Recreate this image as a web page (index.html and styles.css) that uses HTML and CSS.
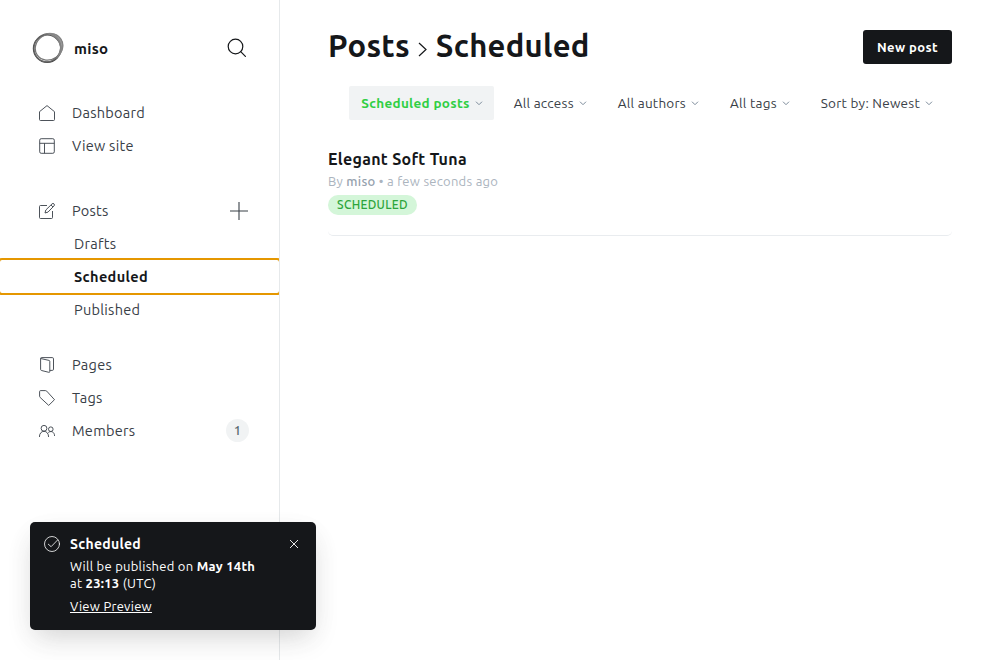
FILE: index.html
```html
<!DOCTYPE html>
<html lang="en">
<head>
<meta charset="utf-8">
<title>Posts - miso</title>
<link rel="stylesheet" href="styles.css">
</head>
<body>
<div class="app">
  <nav class="sidebar">
    <header class="brand">
      <svg class="brand-logo" width="32" height="32" viewBox="0 0 32 32" fill="none">
        <circle cx="15.2" cy="16.6" r="13.7" stroke="#444" stroke-width="1.4"/>
        <ellipse cx="17" cy="15" rx="14.300" ry="12.6" transform="rotate(-35 17 15)" stroke="#777" stroke-width="1.3"/>
        <ellipse cx="15.3" cy="15.8" rx="13.2" ry="14.200" transform="rotate(20 15.3 15.8)" stroke="#666" stroke-width="1.2"/>
        <path d="M14 1.500C21-1 30 4 31 12c.8 6-3 13-8 15.500 4-5 6.500-10 4-16C25 6 20 3.500 14 1.500Z" fill="#888" opacity=".85"/>
      </svg>
      <span class="brand-name">miso</span>
      <svg class="search" width="20" height="20" viewBox="0 0 20 20" fill="none" stroke="#15171a" stroke-width="1.2" stroke-linecap="round"><circle cx="8.500" cy="8.500" r="7.300"/><path d="m13.700 13.700 4.700 4.700"/></svg>
    </header>
    <ul class="menu menu-top">
      <li class="item"><svg class="icon" viewBox="0 0 16 16"><path d="M.5 6.700 8 .6l7.500 6.100v7.800a1 1 0 0 1-1 1h-13a1 1 0 0 1-1-1Z"/></svg><span>Dashboard</span></li>
      <li class="item"><svg class="icon" viewBox="0 0 16 16"><rect x=".7" y=".7" width="14.600" height="14.600" rx="1.500"/><path d="M.7 5.300h14.600M5.500 5.300v10"/></svg><span>View site</span></li>
    </ul>
    <ul class="menu menu-posts">
      <li class="item"><svg class="icon" viewBox="0 0 16 16"><path d="M8 2.500H1.500a1 1 0 0 0-1 1v11a1 1 0 0 0 1 1h11a1 1 0 0 0 1-1V8M6 10l.8-3L13 .9a1.300 1.300 0 0 1 2 2L9 9.100ZM12 2l2 2"/></svg><span>Posts</span>
        <svg class="plus" width="18" height="18" viewBox="0 0 18 18" stroke="#394047" stroke-width="1.100"><path d="M9 0v18M0 9h18"/></svg></li>
      <li class="item sub"><span>Drafts</span></li>
      <li class="item sub active"><span>Scheduled</span></li>
      <li class="item sub"><span>Published</span></li>
    </ul>
    <ul class="menu">
      <li class="item"><svg class="icon" viewBox="0 0 16 16"><path d="M1.600 1.500 10 3.400a1 1 0 0 1 .8 1v10.100a.8.8 0 0 1-1 .8l-7.300-1.800a1.200 1.200 0 0 1-.9-1.200V1.500q0-.9.9-.9h10.800a1.200 1.200 0 0 1 1.200 1.200v10.400a1.200 1.200 0 0 1-1.200 1.200h-2.500"/></svg><span>Pages</span></li>
      <li class="item"><svg class="icon" viewBox="0 0 16 16"><path d="M.6 1.600a1 1 0 0 1 1-1h4.800a2 2 0 0 1 1.300.5l7.800 8.600-5.800 5.700-8.500-7.900a2 2 0 0 1-.6-1.300Z"/></svg><span>Tags</span></li>
      <li class="item"><svg class="icon" viewBox="0 0 16 16"><circle cx="5" cy="5.300" r="2.900"/><circle cx="11.800" cy="6.200" r="2.300"/><path d="M.4 14c0-3.500 2-5.700 4.600-5.700S9.600 10.500 9.600 14M9.300 9.500c2.800-2.100 6.200-.6 6.300 3.500"/></svg><span>Members</span><span class="count">1</span></li>
    </ul>
  </nav>
  <main class="content">
    <header class="heading">
      <h1 class="title"><span>Posts</span><svg class="chevron" width="9" height="15" viewBox="0 0 9 15" fill="none" stroke="#15171a" stroke-width="1.200"><path d="m1 1 7 6.500-7 6.500"/></svg><span>Scheduled</span></h1>
      <button class="new-post">New post</button>
    </header>
    <div class="filters">
      <span class="filter selected"><span>Scheduled posts</span><svg class="caret" viewBox="0 0 8 5"><path d="m1 .7 3 3 3-3"/></svg></span>
      <span class="filter"><span>All access</span><svg class="caret" viewBox="0 0 8 5"><path d="m1 .7 3 3 3-3"/></svg></span>
      <span class="filter"><span>All authors</span><svg class="caret" viewBox="0 0 8 5"><path d="m1 .7 3 3 3-3"/></svg></span>
      <span class="filter"><span>All tags</span><svg class="caret" viewBox="0 0 8 5"><path d="m1 .7 3 3 3-3"/></svg></span>
      <span class="filter"><span>Sort by: Newest</span><svg class="caret" viewBox="0 0 8 5"><path d="m1 .7 3 3 3-3"/></svg></span>
    </div>
    <article class="post">
      <h2 class="post-title">Elegant Soft Tuna</h2>
      <p class="meta">By <b>miso</b> • a few seconds ago</p>
      <span class="status">SCHEDULED</span>
    </article>
  </main>
</div>
<aside class="toast">
  <svg class="check" width="16" height="16" viewBox="0 0 16 16" fill="none" stroke="#fff" stroke-width=".8" stroke-linecap="round" stroke-linejoin="round"><circle cx="8" cy="8" r="7.500"/><path d="m4.300 8.200 2.800 2.500 6.300-6.500"/></svg>
  <div class="toast-body">
    <strong class="toast-title">Scheduled</strong>
    <p class="toast-text">Will be published on <b>May 14th</b><br>at <b>23:13</b> (UTC)</p>
    <a class="preview">View Preview</a>
  </div>
  <svg class="close" width="10" height="10" viewBox="0 0 10 10" stroke="#fff" stroke-width=".9"><path d="m1 1 8 8m0-8-8 8"/></svg>
</aside>
</body>
</html>
```

FILE: styles.css
```css
* { box-sizing: border-box; }
body { margin: 0; background: #fff; color: #15171a; font-family: Ubuntu, "Noto Sans", sans-serif; letter-spacing: .27px; overflow: hidden; }
h1, h2, p, ul { margin: 0; padding: 0; }
.app { display: flex; height: 660px; }
.sidebar { width: 280px; border-right: 1px solid #e6e9eb; overflow: hidden; flex: none; }
.brand { display: flex; align-items: center; height: 32px; margin: 32px 32px 32px 32px; }
.brand-name { font-size: 15px; font-weight: 700; margin-left: 10px; }
.search { margin-left: auto; }
.menu { list-style: none; }
.menu-top { margin-bottom: 32px; }
.menu-posts { margin-bottom: 22px; }
.item { height: 33px; display: flex; align-items: center; padding: 0 30px 0 39px; font-size: 14.5px; color: #394047; white-space: nowrap; }
.icon { width: 16px; height: 16px; margin-right: 17px; fill: none; stroke: #394047; stroke-width: .9; stroke-linejoin: round; }
.sub { padding-left: 74px; }
.active { color: #15171a; font-weight: 700; outline: 2px solid #e59700; border-radius: 2px; letter-spacing: .35px; }
.plus { margin: 0 1px 0 auto; }
.count { margin-left: auto; width: 23px; height: 23px; border-radius: 12px; background: #f1f3f4; font-size: 13px; font-weight: 500; line-height: 23px; text-align: center; color: #54666d; }
.content { flex: 1; padding: 30px 48px 0; white-space: nowrap; }
.heading { display: flex; justify-content: space-between; height: 34px; }
.title { font-size: 31px; line-height: 32px; font-weight: 700; display: flex; align-items: center; height: 32px; }
.chevron { margin: 6px 9px 0 8px; }
.new-post { width: 89px; height: 34px; padding: 0; border: 0; border-radius: 3px; background: #15171a; color: #fff; font: 600 13px Ubuntu, "Noto Sans", sans-serif; letter-spacing: .4px; }
.filters { display: flex; justify-content: flex-end; height: 34px; margin-top: 22px; gap: 8px; padding-right: 8px; }
.filter { display: flex; align-items: center; padding: 0 11px 0 12px; font-size: 13.5px; letter-spacing: .25px; color: #394047; }
.selected { background: #f1f3f4; color: #30cf43; font-weight: 700; border-radius: 2px; letter-spacing: .3px; }
.caret { width: 8px; height: 5px; margin-left: 5px; fill: none; stroke: #7c8b9a; stroke-width: 1; }
.post { margin-top: 28px; height: 88px; border-bottom: 1px solid #e9ecef; border-radius: 5px; display: flex; flex-direction: column; align-items: flex-start; }
.post-title { font-size: 16px; line-height: 22px; font-weight: 600; letter-spacing: .3px; }
.meta { font-size: 13px; line-height: 18px; margin-top: 2px; color: #abb4be; }
.meta b { font-weight: 500; color: #95a1ad; }
.status { height: 20px; width: 89px; margin-top: 5px; border-radius: 10px; background: #d4f6d9; color: #2da53b; font-size: 12px; line-height: 19px; font-weight: 500; text-align: center; letter-spacing: .3px; }
.toast { position: absolute; left: 30px; top: 522px; width: 286px; height: 108px; background: #15171a; color: #fff; border-radius: 5px; padding: 14px 17px 0 14px; display: flex; box-shadow: 0 0 1px rgba(0,0,0,.05), 0 13px 27px -5px rgba(50,50,50,.14), 0 8px 28px -6px rgba(0,0,0,.08); white-space: nowrap; font-size: 13px; }
.toast-body { margin-left: 10px; }
.toast-title { display: block; font-size: 14px; line-height: 16px; letter-spacing: .3px; }
.toast-text { line-height: 17px; margin-top: 6px; }
.check { flex: none; }
.preview { display: inline-block; line-height: 17px; margin-top: 6px; text-decoration: underline; }
.close { margin: 3px 0 0 auto; }
```
